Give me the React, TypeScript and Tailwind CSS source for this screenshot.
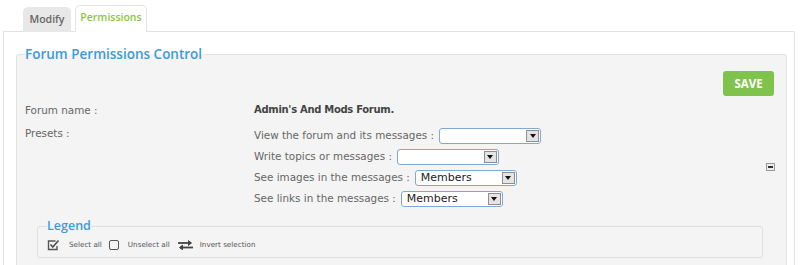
import React from 'react';

const FakeSelect: React.FC<{ value?: string }> = ({ value }) => (
  <div className="flex h-[16px] w-[102px] items-stretch rounded-[3px] border border-[#7fa9d2] bg-white p-px">
    <span className="flex-1 pl-[4px] text-[11px] leading-[12px] text-[#222]">{value}</span>
    <span className="flex w-[13px] items-center justify-center border border-[#8e8e8e] bg-[#e4e4e4]">
      <span className="h-0 w-0 border-x-[3px] border-t-[4px] border-x-transparent border-t-[#111]" />
    </span>
  </div>
);

const presets = [
  { label: 'View the forum and its messages :', value: '' },
  { label: 'Write topics or messages :', value: '' },
  { label: 'See images in the messages :', value: 'Members' },
  { label: 'See links in the messages :', value: 'Members' },
];

const CheckedBox = () => (
  <svg width="13" height="12" viewBox="0 0 13 12" fill="none" stroke="#555" strokeWidth="1.4">
    <path d="M8.5 2H1.5V10.5H10V7" />
    <path d="M3.5 5.5L5.8 8L11.5 1.5" strokeWidth="1.8" />
  </svg>
);

const EmptyBox = () => (
  <span className="inline-block h-[10px] w-[10px] rounded-[2px] border-[1.5px] border-[#555]" />
);

const SwapArrows = () => (
  <svg width="17" height="10" viewBox="0 0 17 10" fill="none" stroke="#444" strokeWidth="1.8">
    <path d="M1 3H14" />
    <path d="M11 0.5L14.5 3L11 5.5" fill="#444" strokeWidth="1" />
    <path d="M16 7.5H3" />
    <path d="M6 5L2.5 7.5L6 10" fill="#444" strokeWidth="1" />
  </svg>
);

export default function App() {
  return (
    <div className="h-[265px] w-[800px] overflow-hidden bg-white font-['DejaVu_Sans',sans-serif] text-[#666]">
      {/* tabs */}
      <div className="relative z-10 flex h-[32px] items-end gap-[4px] pl-[23px] font-['Open_Sans',sans-serif] text-[10.5px] font-semibold">
        <div className="flex h-[25px] w-[48px] items-center justify-center rounded-t-[5px] bg-[#e8e8e8] text-[#666]">
          Modify
        </div>
        <div className="flex h-[27px] w-[72px] items-center justify-center rounded-t-[5px] border border-b-0 border-[#e3e3e3] bg-white pb-[2px] text-[#8cc63f]">
          Permissions
        </div>
      </div>

      <div className="-mt-px ml-[3px] mr-[5px] h-[300px] border border-[#e2e2e2] pl-[12px] pr-[7px] pt-[13px]">
        <fieldset className="rounded-[3px] border border-[#e2e2e2] bg-[#f4f4f4] pb-[20px] pl-[8px] pr-[12px] pt-[8px]">
          <legend className="pr-[2px] font-['Open_Sans',sans-serif] text-[13.5px] font-semibold leading-[18px] text-[#3d9bd7]">
            Forum Permissions Control
          </legend>

          <div className="flex justify-end">
            <button className="h-[25px] w-[51px] rounded-[3px] bg-[#80c34c] font-['Open_Sans',sans-serif] text-[11.5px] font-bold text-white">
              SAVE
            </button>
          </div>

          <div className="mt-[6px] flex text-[10.4px] leading-[16px]">
            <div className="w-[229px]">Forum name :</div>
            <div className="text-[10px] font-bold tracking-[-0.3px] text-[#444]">Admin's And Mods Forum.</div>
          </div>

          <div className="mt-[7px] flex items-center text-[10.4px]">
            <div className="flex">
              <div className="w-[229px] self-start leading-[16px]">Presets :</div>
              <div className="flex flex-col">
                {presets.map((p) => (
                  <div key={p.label} className="flex h-[21px] items-center gap-[5px]">
                    <span>{p.label}</span>
                    <FakeSelect value={p.value} />
                  </div>
                ))}
              </div>
            </div>
            <span className="ml-auto mr-[-1px] flex h-[8px] w-[9px] items-center justify-center border border-[#9a9a9a] bg-[#ececec]">
              <span className="h-[1.5px] w-[5px] bg-[#333]" />
            </span>
          </div>

          <fieldset className="ml-[12px] mr-[11px] mt-[9px] rounded-[3px] border border-[#e0e0e0] bg-[#f4f4f4] pb-[5px] pl-[9px] pt-[4px] shadow-[0_0_1px_rgba(0,0,0,0.08)]">
            <legend className="font-['Open_Sans',sans-serif] text-[12.5px] font-semibold leading-[16px] text-[#3d9bd7]">
              Legend
            </legend>
            <div className="flex h-[14px] items-center text-[7.2px] text-[#555]">
              <CheckedBox />
              <span className="ml-[9px]">Select all</span>
              <span className="ml-[7px] flex"><EmptyBox /></span>
              <span className="ml-[9px]">Unselect all</span>
              <span className="ml-[7px] flex"><SwapArrows /></span>
              <span className="ml-[6px]">Invert selection</span>
            </div>
          </fieldset>
        </fieldset>
      </div>
    </div>
  );
}
